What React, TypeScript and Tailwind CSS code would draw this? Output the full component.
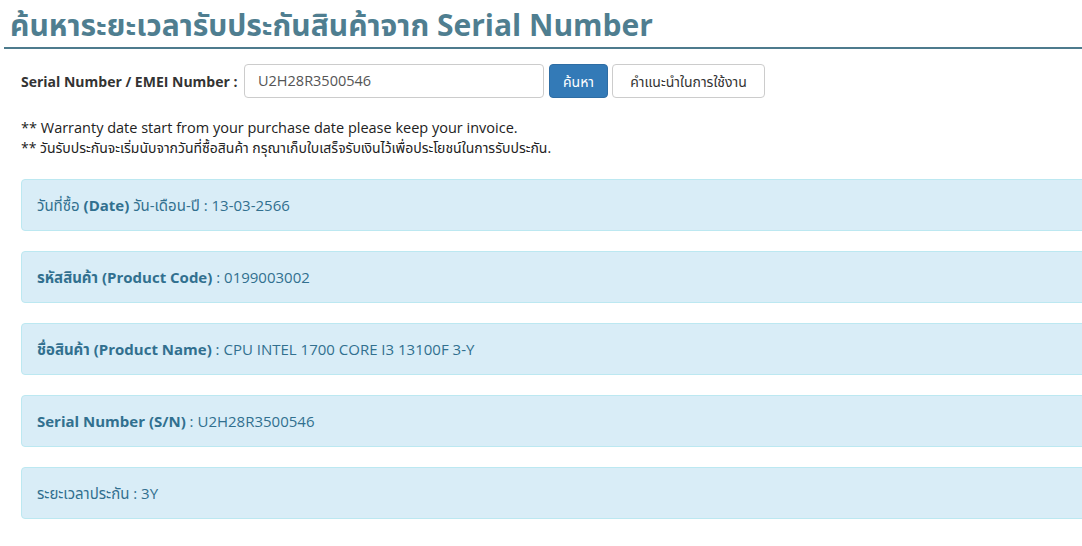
import React from "react";

const rows: { label: string; value: string }[] = [
  { label: "วันที่ซื้อ (Date) วัน-เดือน-ปี", value: "13-03-2566" },
  { label: "รหัสสินค้า (Product Code)", value: "0199003002" },
  { label: "ชื่อสินค้า (Product Name)", value: "CPU INTEL 1700 CORE I3 13100F 3-Y" },
  { label: "Serial Number (S/N)", value: "U2H28R3500546" },
  { label: "ระยะเวลาประกัน", value: "3Y" },
];

function Row({ label, value, idx }: { label: string; value: string; idx: number }) {
  return (
    <div className="h-[52px] w-[1080px] shrink-0 flex items-center pl-[15px] bg-[#d9edf7] border border-[#bce8f1] rounded-[4px] text-[15px] text-[#31708f]">
      {idx === 0 ? (
        <span>
          วันที่ซื้อ <b className="font-bold">(Date)</b> วัน-เดือน-ปี : {value}
        </span>
      ) : idx === 4 ? (
        <span>
          {label} : {value}
        </span>
      ) : (
        <span>
          <b className="font-bold">{label}</b> : {value}
        </span>
      )}
    </div>
  );
}

export default function App() {
  return (
    <div
      className="w-[1082px] h-[546px] overflow-hidden bg-white text-[#333]"
      style={{ fontFamily: '"Open Sans", "Noto Sans", "Noto Sans Thai", sans-serif' }}
    >
      <div className="ml-[4px] border-b-2 border-[#4d7b8d] pb-[5px] pt-[7px] pl-[6px]">
        <h1 className="text-[30px] font-bold leading-[35px] text-[#4f7e90]">
          ค้นหาระยะเวลารับประกันสินค้าจาก Serial Number
        </h1>
      </div>

      <div className="pl-[21px]">
        <div className="flex items-center mt-[15px] h-[34px]">
          <label className="text-[14px] font-bold text-[#333] w-[223px]">Serial Number / EMEI Number :</label>
          <div className="w-[300px] h-[34px] border border-[#ccc] rounded-[4px] flex items-center pl-[13px] text-[14.5px] text-[#555]">
            U2H28R3500546
          </div>
          <button className="ml-[5px] w-[59px] h-[34px] rounded-[4px] bg-[#337ab7] border border-[#2e6da4] text-white text-[14px]">
            ค้นหา
          </button>
          <button className="ml-[4px] w-[153px] h-[34px] rounded-[4px] bg-white border border-[#ccc] text-[#333] text-[14px]">
            คำแนะนำในการใช้งาน
          </button>
        </div>

        <div className="mt-[20px] text-[14.5px] font-medium leading-[20px] text-[#222]">
          ** Warranty date start from your purchase date please keep your invoice.
        </div>
        <div className="text-[14px] leading-[20px] text-[#222]">
          ** วันรับประกันจะเริ่มนับจากวันที่ซื้อสินค้า กรุณาเก็บใบเสร็จรับเงินไว้เพื่อประโยชน์ในการรับประกัน.
        </div>

        <div className="mt-[21px] flex flex-col gap-[20px]">
          {rows.map((r, i) => (
            <Row key={i} label={r.label} value={r.value} idx={i} />
          ))}
        </div>
      </div>
    </div>
  );
}
